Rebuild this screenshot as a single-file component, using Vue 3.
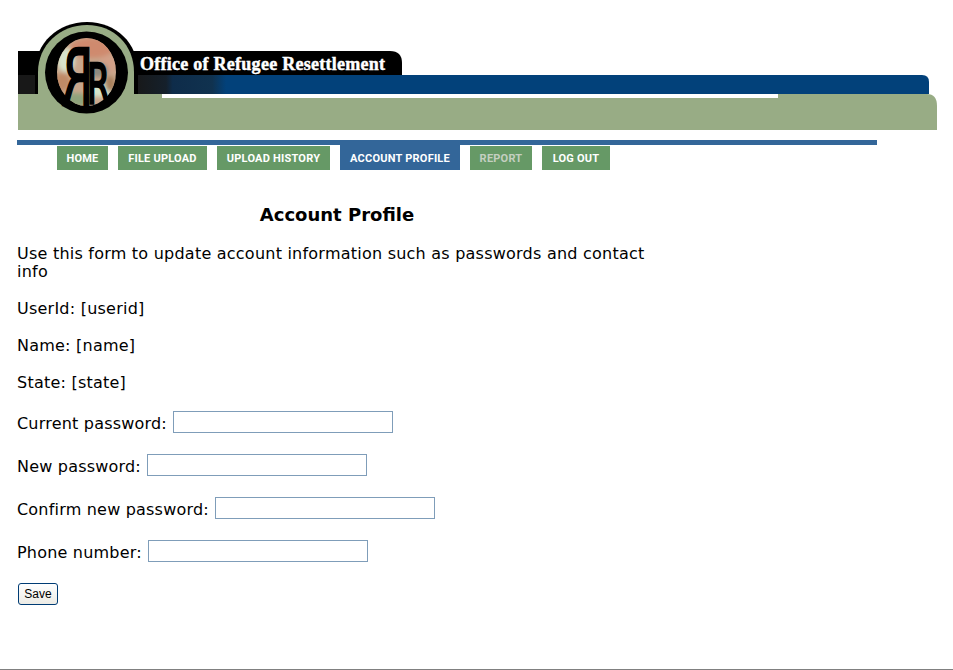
<script setup>
const nav = [
  { label: 'HOME', width: 51 },
  { label: 'FILE UPLOAD', width: 89 },
  { label: 'UPLOAD HISTORY', width: 113 },
  { label: 'ACCOUNT PROFILE', width: 120, active: true },
  { label: 'REPORT', width: 62, muted: true },
  { label: 'LOG OUT', width: 68 }
]
const fields = ['Current password:', 'New password:', 'Confirm new password:', 'Phone number:']
</script>

<template>
  <div class="page">
    <svg class="banner" width="953" height="140" viewBox="0 0 953 140" role="img">
      <defs>
        <linearGradient id="fade" x1="0" x2="1" y1="0" y2="0">
          <stop offset="0" stop-color="#181818" />
          <stop offset="0.35" stop-color="#15202b" />
          <stop offset="0.42" stop-color="#0e2c4a" />
          <stop offset="0.85" stop-color="#10324f" />
          <stop offset="1" stop-color="#02417a" />
        </linearGradient>
        <clipPath id="oval"><ellipse cx="86.5" cy="72" rx="29.5" ry="34" /></clipPath>
        <filter id="soft" x="-20%" y="-20%" width="140%" height="140%"><feGaussianBlur stdDeviation="2" /></filter>
      </defs>
      <path d="M18 51H390Q402 51 402 63V75H18Z" fill="#000" />
      <path d="M18 75H922Q929 75 929 82V94H18Z" fill="#02417a" />
      <rect x="18" y="75" width="208" height="19" fill="#181818" />
      <rect x="134" y="75" width="92" height="19" fill="url(#fade)" />
      <path d="M18 94H927Q937 94 937 106V130H18Z" fill="#98ac85" />
      <rect x="162" y="94" width="616" height="4" fill="#fff" />
      <path d="M35 94V72C35 43 58 22 87 22C116 22 138 43 138 72V94Z" fill="#000" />
      <path d="M38 94V72C38 45 60 25 87 25C114 25 134 45 134 72V94Z" fill="#98ac85" />
      <ellipse cx="86.5" cy="72.5" rx="41.5" ry="41" fill="#000" />
      <g clip-path="url(#oval)">
        <rect x="55" y="36" width="64" height="72" fill="#c9a78c" />
        <g filter="url(#soft)">
          <ellipse cx="92" cy="48" rx="22" ry="10" fill="#cf8a6e" />
          <ellipse cx="66" cy="60" rx="9" ry="12" fill="#d8e4cc" />
          <ellipse cx="108" cy="64" rx="9" ry="9" fill="#d3a088" />
          <ellipse cx="98" cy="70" rx="10" ry="7" fill="#8c8a80" />
          <ellipse cx="62" cy="82" rx="8" ry="9" fill="#c08a66" />
          <ellipse cx="100" cy="90" rx="14" ry="7" fill="#d6e6cc" />
          <ellipse cx="76" cy="100" rx="13" ry="7" fill="#8fa37c" />
          <ellipse cx="110" cy="84" rx="5" ry="8" fill="#a8805c" />
        </g>
      </g>
      <text class="logo-r" transform="translate(93 105) scale(-0.58 1)" x="0" y="0">R</text>
      <text class="logo-r small" transform="translate(87 103) scale(0.6 1)" x="0" y="0">R</text>
      <text x="140" y="70" class="title" textLength="245" lengthAdjust="spacing">Office of Refugee Resettlement</text>
    </svg>

    <div class="rule"></div>
    <nav class="nav">
      <a
        v-for="item in nav"
        :key="item.label"
        class="tab"
        :class="{ active: item.active, muted: item.muted }"
        :style="{ width: item.width + 'px' }"
      >{{ item.label }}</a>
    </nav>

    <main class="content">
      <h1>Account Profile</h1>
      <p class="intro">Use this form to update account information such as passwords and contact info</p>
      <p class="line">UserId: [userid]</p>
      <p class="line">Name: [name]</p>
      <p class="line">State: [state]</p>
      <div v-for="f in fields" :key="f" class="field">
        <label>{{ f }}</label>
        <input type="text" />
      </div>
      <button class="save" type="button">Save</button>
    </main>

    <hr class="foot" />
  </div>
</template>

<style scoped>
.page {
  width: 953px;
  height: 670px;
  overflow: hidden;
  background: #fff;
  font-family: "DejaVu Sans", sans-serif;
  color: #000;
}
.banner { display: block; }
.rule {
  width: 860px;
  height: 5px;
  margin-left: 17px;
  background: #336699;
}
.nav {
  display: flex;
  gap: 10px;
  margin-left: 57px;
  height: 25px;
}
.tab {
  display: flex;
  align-items: center;
  justify-content: center;
  height: 24px;
  margin-top: 1px;
  background: #669966;
  color: #fff;
  font-family: Roboto, "Liberation Sans", sans-serif;
  font-size: 11px;
  font-weight: 700;
  letter-spacing: 0.22px;
  white-space: nowrap;
}
.tab.active {
  height: 25px;
  margin-top: 0;
  padding-top: 1px;
  box-sizing: border-box;
  background: #336699;
}
.tab.muted { color: #c4cfc0; }
.content {
  width: 640px;
  margin-left: 17px;
}
h1 {
  margin: 34px 0 0;
  text-align: center;
  font-size: 18px;
  line-height: 22px;
  font-weight: 700;
}
p { margin: 0; font-size: 16px; line-height: 18px; letter-spacing: 0.23px; }
.intro { margin-top: 19px; }
.line { margin-top: 19px; }
.field {
  display: flex;
  align-items: center;
  gap: 6px;
  height: 22px;
  margin-top: 21px;
  font-size: 16px;
  letter-spacing: 0.2px;
}
.field label { margin-top: 2px; }
.line + .field { margin-top: 19px; }
input {
  box-sizing: border-box;
  width: 220px;
  height: 22px;
  border: 1px solid #7f9db9;
  padding: 0 2px;
  background: #fff;
}
.save {
  display: block;
  box-sizing: border-box;
  width: 40px;
  height: 22px;
  margin: 21px 0 0 1px;
  padding: 0;
  border: 1px solid #003c74;
  border-radius: 3px;
  background: linear-gradient(#fff, #ecebe5);
  font-family: "Liberation Sans", sans-serif;
  font-size: 12px;
  color: #000;
}
.foot {
  margin: 64px 0 0;
  border: 0;
  border-top: 1px solid #808080;
}
.logo-r { font-family: "DejaVu Sans", sans-serif; font-size: 78px; fill: #000; stroke: #000; stroke-width: 2.5px; }
.logo-r.small { font-size: 55px; }
.title { font-family: "Liberation Serif", serif; font-weight: 700; font-size: 18px; fill: #fff; stroke: #fff; stroke-width: 0.45px; }
</style>
